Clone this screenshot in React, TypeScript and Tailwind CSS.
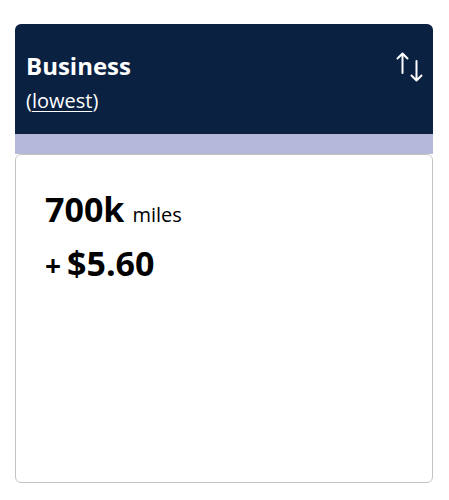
export default function App() {
  return (
    <div className="min-h-[500px] bg-white pt-6 px-[15px]" style={{ fontFamily: '"Open Sans", sans-serif' }}>
      <div className="w-[418px]">
        <div className="flex h-[110px] items-start justify-between rounded-t-md bg-[#0a2142] pl-[11px] pr-[10px] pt-[27px] text-white">
          <div>
            <div className="text-[24px] font-bold leading-[30px]">Business</div>
            <div className="mt-2 text-[20px] leading-[24px]">
              (<span className="underline underline-offset-[3px] decoration-1">lowest</span>)
            </div>
          </div>
          <svg width="28" height="30" viewBox="0 0 28 30" fill="none" stroke="white" strokeWidth="2" strokeLinecap="round" strokeLinejoin="round" className="mt-[1px]">
            <path d="M7.5 1.5v19.5M2.5 6.5l5-5 5 5" />
            <path d="M21.5 9v19.5M16.5 23.5l5 5 5-5" />
          </svg>
        </div>
        <div className="h-5 bg-[#b6b8d9]" />
        <div className="h-[329px] rounded-md border border-[#c4c4c4] px-[29px] pt-[32px]">
          <div className="flex items-baseline gap-2 text-black">
            <span className="text-[34px] font-bold leading-[44px]">700k</span>
            <span className="text-[20px]">miles</span>
          </div>
          <div className="mt-[11px] flex items-baseline gap-[6px] text-black">
            <span className="text-[28px] font-bold leading-[42px]">+</span>
            <span className="text-[34px] font-bold leading-[42px]">$5.60</span>
          </div>
        </div>
      </div>
    </div>
  );
}
